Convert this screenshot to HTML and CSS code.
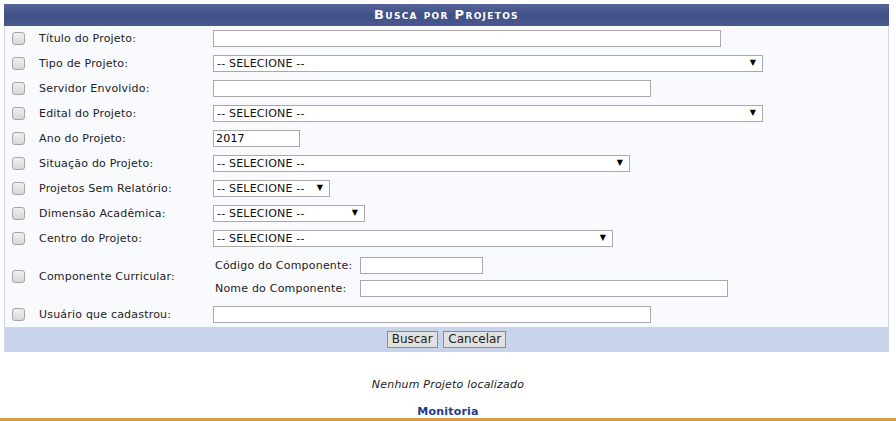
FILE: index.html
```html
<!DOCTYPE html>
<html lang="pt-BR">
<head>
    <meta charset="UTF-8">
    <title>Busca por Projetos</title>
    <link rel="stylesheet" href="styles.css">
</head>
<body>
    <table class="formulario">
        <caption>Busca por Projetos</caption>
        <tbody>
            <tr>
                <td class="chk"><input type="checkbox"></td>
                <td class="lbl">Título do Projeto:</td>
                <td><input type="text" class="w508"></td>
            </tr>
            <tr>
                <td class="chk"><input type="checkbox"></td>
                <td class="lbl">Tipo de Projeto:</td>
                <td><span class="sel w550"><select><option>-- SELECIONE --</option></select><i>&#9660;</i></span></td>
            </tr>
            <tr>
                <td class="chk"><input type="checkbox"></td>
                <td class="lbl">Servidor Envolvido:</td>
                <td><input type="text" class="w438"></td>
            </tr>
            <tr>
                <td class="chk"><input type="checkbox"></td>
                <td class="lbl">Edital do Projeto:</td>
                <td><span class="sel w550"><select><option>-- SELECIONE --</option></select><i>&#9660;</i></span></td>
            </tr>
            <tr>
                <td class="chk"><input type="checkbox"></td>
                <td class="lbl">Ano do Projeto:</td>
                <td><input type="text" class="w87" value="2017"></td>
            </tr>
            <tr>
                <td class="chk"><input type="checkbox"></td>
                <td class="lbl">Situação do Projeto:</td>
                <td><span class="sel w417"><select><option>-- SELECIONE --</option></select><i>&#9660;</i></span></td>
            </tr>
            <tr>
                <td class="chk"><input type="checkbox"></td>
                <td class="lbl">Projetos Sem Relatório:</td>
                <td><span class="sel w117"><select><option>-- SELECIONE --</option></select><i>&#9660;</i></span></td>
            </tr>
            <tr>
                <td class="chk"><input type="checkbox"></td>
                <td class="lbl">Dimensão Acadêmica:</td>
                <td><span class="sel w152"><select><option>-- SELECIONE --</option></select><i>&#9660;</i></span></td>
            </tr>
            <tr>
                <td class="chk"><input type="checkbox"></td>
                <td class="lbl">Centro do Projeto:</td>
                <td><span class="sel w400"><select><option>-- SELECIONE --</option></select><i>&#9660;</i></span></td>
            </tr>
            <tr class="tall">
                <td class="chk"><input type="checkbox"></td>
                <td class="lbl">Componente Curricular:</td>
                <td>
                    <table class="sub">
                        <tr>
                            <td class="sublbl">Código do Componente:</td>
                            <td><input type="text" class="w123"></td>
                        </tr>
                        <tr>
                            <td class="sublbl">Nome do Componente:</td>
                            <td><input type="text" class="w368"></td>
                        </tr>
                    </table>
                </td>
            </tr>
            <tr>
                <td class="chk"><input type="checkbox"></td>
                <td class="lbl">Usuário que cadastrou:</td>
                <td><input type="text" class="w438"></td>
            </tr>
        </tbody>
        <tfoot>
            <tr>
                <td colspan="3">
                    <button>Buscar</button>
                    <button>Cancelar</button>
                </td>
            </tr>
        </tfoot>
    </table>

    <p class="vazio">Nenhum Projeto localizado</p>

    <div class="rodape">Monitoria</div>
</body>
</html>
```

FILE: styles.css
```css
body {
    margin: 4px 0 0 0;
    font-family: "DejaVu Sans", Verdana, sans-serif;
    font-size: 11px;
    letter-spacing: 0.2px;
    color: #222;
    background: #fff;
}
.formulario {
    margin: 0 7px 0 4px;
    width: 885px;
    border-collapse: collapse;
    background: #f9fafd;
    border-left: 1px solid #d4d8e2;
    border-right: 1px solid #d4d8e2;
}
.formulario caption {
    height: 22px;
    line-height: 22px;
    background: linear-gradient(#55669b, #404f86 50%, #4a5a90);
    color: #fff;
    font-weight: bold;
    font-variant: small-caps;
    font-size: 13px;
    letter-spacing: 1.3px;
    text-align: center;
}
.formulario tbody td {
    height: 25px;
    padding: 0;
    vertical-align: middle;
}
.formulario td.chk {
    width: 34px;
}
.formulario td.lbl {
    width: 174px;
}
.formulario tr.tall td {
    height: 51px;
}
input[type="checkbox"] {
    appearance: none;
    display: block;
    width: 13px;
    height: 13px;
    margin: 0 0 0 7px;
    border: 1px solid #a6a6a6;
    border-radius: 3px;
    background: linear-gradient(#f0f0f0, #d8d8d8);
}
input[type="text"] {
    box-sizing: border-box;
    display: block;
    height: 17px;
    margin: 0;
    padding: 0 2px;
    border: 1px solid #a9a9a9;
    background: #fff;
    font-family: "DejaVu Sans", Verdana, sans-serif;
    font-size: 11px;
    letter-spacing: 0.2px;
    color: #000;
}
.sel {
    position: relative;
    display: block;
    height: 17px;
}
.sel select {
    appearance: none;
    box-sizing: border-box;
    width: 100%;
    height: 17px;
    margin: 0;
    padding: 0 3px;
    border: 1px solid #a9a9a9;
    border-radius: 0;
    background: #fff;
    font-family: "DejaVu Sans", Verdana, sans-serif;
    font-size: 11px;
    letter-spacing: 0.2px;
    color: #111;
}
.sel i {
    position: absolute;
    right: 7px;
    top: 3px;
    font-style: normal;
    font-size: 8px;
    line-height: 10px;
    color: #000;
}
.w87 { width: 87px; }
.w117 { width: 117px; }
.w123 { width: 123px; }
.w152 { width: 152px; }
.w368 { width: 368px; }
.w400 { width: 400px; }
.w417 { width: 417px; }
.w438 { width: 438px; }
.w508 { width: 508px; }
.w550 { width: 550px; }
.sub {
    border-collapse: collapse;
    margin-top: 1px;
}
.formulario tr.tall .sub td {
    height: 23px;
    padding: 0;
}
.formulario tr.tall .sub td.sublbl {
    width: 145px;
    padding-left: 2px;
}
.formulario tfoot td {
    height: 25px;
    padding: 0;
    background: #c8d4eb;
    text-align: center;
    vertical-align: middle;
}
button {
    height: 17px;
    margin: 0 1px;
    padding: 0 4px;
    border: 1px solid #8c8c8c;
    background: #e1e1e1;
    font-family: "DejaVu Sans", Verdana, sans-serif;
    font-size: 12px;
    line-height: 15px;
    color: #222;
}
.vazio {
    margin: 26px 0 0 0;
    text-align: center;
    font-style: italic;
    color: #222;
}
.rodape {
    margin-top: 14px;
    text-align: center;
    font-weight: bold;
    color: #1c3b8d;
    line-height: 13px;
    border-bottom: 6px solid #db9e47;
}
```
